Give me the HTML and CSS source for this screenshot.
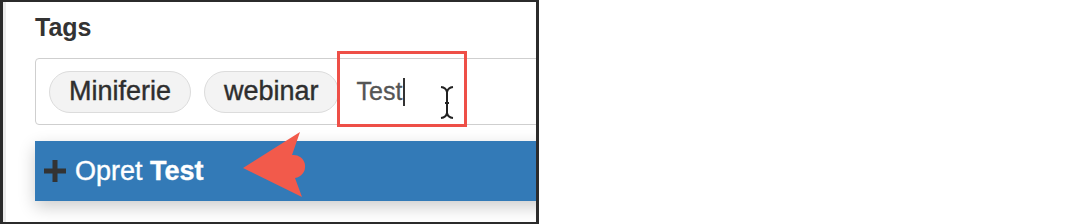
FILE: index.html
```html
<!DOCTYPE html>
<html lang="da">
<head>
    <meta charset="UTF-8">
    <title>Tags</title>
    <link rel="stylesheet" href="styles.css">
</head>
<body>
    <div class="shot">
        <div class="panel">
            <div class="label">Tags</div>
            <div class="tag-input">
                <span class="chip">Miniferie</span>
                <span class="chip">webinar</span>
                <span class="typed">Test<span class="caret"></span></span>
            </div>
            <div class="dropdown">
                <svg class="plus" width="24" height="24" viewBox="0 0 24 24">
                    <path d="M12 1 V23 M1 12 H23" stroke="#333" stroke-width="5" fill="none"/>
                </svg>
                <span class="create">Opret <b>Test</b></span>
            </div>
        </div>

        <!-- annoteringer ovenpå skærmbilledet -->
        <svg class="marks" width="539" height="224" viewBox="0 0 539 224">
            <rect x="338.5" y="52.5" width="127" height="73" fill="none" stroke="#ee4f47" stroke-width="3"/>
            <path d="M441 87 Q446 87.5 447 92 Q448 87.5 453 87 M447 92 V113 M441 118 Q446 117.5 447 113 Q448 117.5 453 118 M445 103 H449" stroke="#222" stroke-width="2" fill="none"/>
            <path d="M243 168 L300 132 L292 155 A11.5 11.5 0 1 1 295 178 L302 197 Z" fill="#f25a4b"/>
        </svg>
    </div>
</body>
</html>
```

FILE: styles.css
```css
body {
    margin: 0;
    background: #fff;
    font-family: "Liberation Sans", Arial, sans-serif;
}

.shot {
    position: relative;
    width: 539px;
    height: 224px;
    box-sizing: border-box;
    padding: 2px 3px;
    background: #2b2b2b;
}

.panel {
    height: 220px;
    box-sizing: border-box;
    background: #fff;
    border-left: 3px solid #ebebeb;
    padding: 11px 0 0 29px;
    overflow: hidden;
}

.label {
    font-size: 25px;
    line-height: 28px;
    font-weight: bold;
    color: #333;
    margin-bottom: 17px;
}

.tag-input {
    width: 560px;
    height: 67px;
    box-sizing: border-box;
    display: flex;
    align-items: center;
    gap: 13px;
    padding: 0 13px;
    border: 1px solid #cfcfcf;
    border-radius: 4px;
}

.chip {
    height: 42px;
    box-sizing: border-box;
    display: flex;
    align-items: center;
    padding: 0 19px;
    border: 1px solid #dcdcdc;
    border-radius: 21px;
    background: #f3f3f3;
    font-size: 27px;
    color: #2e2e2e;
    -webkit-text-stroke: 0.4px #2e2e2e;
}

.typed {
    display: flex;
    align-items: center;
    margin-left: 5px;
    font-size: 25px;
    color: #555;
    -webkit-text-stroke: 0.3px #555;
}

.caret {
    width: 2px;
    height: 28px;
    margin-left: 1px;
    background: #333;
}

.dropdown {
    width: 560px;
    height: 60px;
    margin-top: 16px;
    display: flex;
    align-items: center;
    gap: 8px;
    padding-left: 8px;
    box-sizing: border-box;
    background: #337ab7;
    box-shadow: 0 6px 16px rgba(0, 0, 0, 0.2);
}

.create {
    font-size: 27px;
    color: #fff;
    -webkit-text-stroke: 0.4px #fff;
}

.marks {
    position: absolute;
    top: 0;
    left: 0;
}
```
